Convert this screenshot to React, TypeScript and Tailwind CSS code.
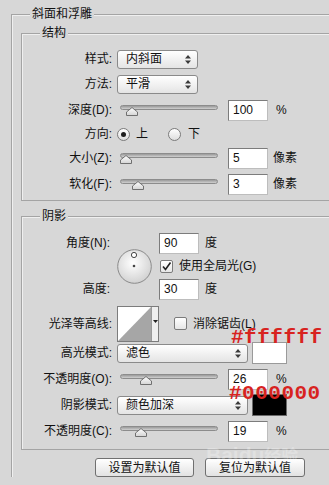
import type { ReactNode } from 'react'

const LINE = 'border-[#a4a4a4]'
const BG = 'bg-[#d7d7d7]'

function UpDown() {
  return (
    <svg width="6" height="9" viewBox="0 0 6 9">
      <path d="M3 0 L6 3.5 H0 Z M0 5.5 H6 L3 9 Z" fill="#3a3a3a" />
    </svg>
  )
}

function Select({ value, className }: { value: string; className: string }) {
  return (
    <div
      className={`flex h-[19px] items-center justify-between rounded-[3px] border border-[#8a8a8a] bg-linear-to-b from-white to-[#e4e4e4] pl-[8px] pr-[6px] ${className}`}
    >
      <span>{value}</span>
      <UpDown />
    </div>
  )
}

function Slider({ pos }: { pos: number }) {
  return (
    <div className="relative ml-[3px] h-[22px] w-[98px] shrink-0">
      <div className="absolute top-[6px] left-0 h-[5px] w-full rounded-full border border-[#8c8c8c] bg-linear-to-b from-[#9a9a9a] to-[#d0d0d0]" />
      <svg
        className="absolute top-[8px]"
        style={{ left: pos }}
        width="12"
        height="9"
        viewBox="0 0 12 9"
      >
        <defs>
          <linearGradient id="th" x1="0" y1="0" x2="0" y2="1">
            <stop offset="0" stopColor="#ffffff" />
            <stop offset="1" stopColor="#d4d4d4" />
          </linearGradient>
        </defs>
        <path d="M6 0.5 L11.5 5 V8.5 H0.5 V5 Z" fill="url(#th)" stroke="#707070" strokeLinejoin="round" />
      </svg>
    </div>
  )
}

function NumInput({ value, className = 'ml-[10px]' }: { value: string; className?: string }) {
  return (
    <div
      className={`flex h-[21px] w-[40px] shrink-0 items-center border border-[#7c7c7c] border-r-[#bdbdbd] border-b-[#bdbdbd] bg-white pl-[4px] ${className}`}
    >
      {value}
    </div>
  )
}

function Label({ children }: { children: ReactNode }) {
  return <div className="w-[91px] shrink-0 pr-[1px] text-right">{children}</div>
}

function Radio({ checked }: { checked?: boolean }) {
  return (
    <div className="flex h-[13px] w-[13px] items-center justify-center rounded-full border border-[#7b7b7b] bg-linear-to-b from-white to-[#dedede]">
      {checked && <div className="h-[5px] w-[5px] rounded-full bg-[#1e1e1e]" />}
    </div>
  )
}

function Check({ checked }: { checked?: boolean }) {
  return (
    <div className="flex h-[13px] w-[13px] items-center justify-center rounded-[2px] border border-[#7b7b7b] bg-linear-to-b from-white to-[#e6e6e6]">
      {checked && (
        <svg width="11" height="11" viewBox="0 0 11 11">
          <path d="M2 5.5 L4.5 8.5 L9.5 1.5" fill="none" stroke="#1e1e1e" strokeWidth="1.6" />
        </svg>
      )}
    </div>
  )
}

function Group({ title, className, children }: { title: string; className: string; children: ReactNode }) {
  return (
    <div className={`relative border-t border-l ${LINE} shadow-[inset_1px_1px_0_#efefef] ${className}`}>
      <span className={`absolute top-[-9px] left-[18px] px-[2px] leading-[16px] ${BG}`}>{title}</span>
      {children}
    </div>
  )
}

export default function App() {
  return (
    <div
      className={`relative h-[485px] w-[329px] overflow-hidden ${BG} font-['Liberation_Sans','Noto_Sans_CJK_SC',sans-serif] text-[12px] leading-none text-[#111]`}
    >
      <Group title="斜面和浮雕" className="mt-[14px] ml-[11px] w-[345px]">
        <Group title="结构" className="mt-[18px] ml-[9px] border-b pt-[14px] pb-[5px]">
          <div className="flex h-[22px] items-center">
            <Label>样式:</Label>
            <Select value="内斜面" className="ml-[4px] w-[81px]" />
          </div>
          <div className="mt-[3px] flex h-[22px] items-center">
            <Label>方法:</Label>
            <Select value="平滑" className="ml-[4px] w-[81px]" />
          </div>
          <div className="mt-[4px] flex h-[22px] items-center">
            <Label>深度(D):</Label>
            <div className="ml-[4px] flex items-center">
              <Slider pos={6} />
              <NumInput value="100" />
              <span className="ml-[8px]">%</span>
            </div>
          </div>
          <div className="mt-[2px] flex h-[22px] items-center">
            <Label>方向:</Label>
            <div className="ml-[4px] flex items-center">
              <Radio checked />
              <span className="ml-[6px]">上</span>
              <div className="ml-[20px]">
                <Radio />
              </div>
              <span className="ml-[7px]">下</span>
            </div>
          </div>
          <div className="mt-[2px] flex h-[22px] items-center">
            <Label>大小(Z):</Label>
            <div className="ml-[4px] flex items-center">
              <Slider pos={0} />
              <NumInput value="5" />
              <span className="ml-[5px]">像素</span>
            </div>
          </div>
          <div className="mt-[4px] flex h-[22px] items-center">
            <Label>软化(F):</Label>
            <div className="ml-[4px] flex items-center">
              <Slider pos={12} />
              <NumInput value="3" />
              <span className="ml-[5px]">像素</span>
            </div>
          </div>
        </Group>

        <Group title="阴影" className="mt-[15px] ml-[9px] border-b pt-[15px] pb-[7px]">
          <div className="flex">
            <div className="flex w-[91px] shrink-0 flex-col">
              <div className="flex h-[22px] items-center justify-end pr-[3px]">角度(N):</div>
              <div className="mt-[1px] h-[22px]" />
              <div className="mt-[1px] flex h-[22px] items-center justify-end pr-[3px]">高度:</div>
            </div>
            <div className="mt-[17px] ml-[4px]">
              <svg width="35" height="35" viewBox="0 0 35 35">
                <defs>
                  <radialGradient id="dial" cx="0.45" cy="0.4" r="0.6">
                    <stop offset="0" stopColor="#ffffff" />
                    <stop offset="1" stopColor="#d2d2d2" />
                  </radialGradient>
                </defs>
                <circle cx="17.5" cy="17.5" r="16.8" fill="url(#dial)" stroke="#8a8a8a" />
                <circle cx="17" cy="6" r="2.6" fill="#fff" stroke="#444" />
                <circle cx="17" cy="17" r="1.3" fill="#444" />
              </svg>
            </div>
            <div className="ml-[7px] flex flex-col">
              <div className="flex h-[22px] items-center">
                <NumInput value="90" className="" />
                <span className="ml-[6px]">度</span>
              </div>
              <div className="mt-[1px] flex h-[22px] items-center">
                <div className="ml-[1px]">
                  <Check checked />
                </div>
                <span className="ml-[6px]">使用全局光(G)</span>
              </div>
              <div className="mt-[1px] flex h-[22px] items-center">
                <NumInput value="30" className="" />
                <span className="ml-[6px]">度</span>
              </div>
            </div>
          </div>

          <div className="mt-[5px] flex h-[37px] items-center">
            <Label>光泽等高线:</Label>
            <div className="ml-[4px] flex h-[36px] w-[42px] border border-[#7c7c7c] bg-white">
              <svg width="33" height="34" viewBox="0 0 33 34">
                <path d="M0 34 L33 0 V34 Z" fill="#a6a6a6" />
              </svg>
              <div className="flex w-[7px] justify-center border-l border-[#9a9a9a] bg-[#efefef] pt-[13px]">
                <svg width="5" height="3" viewBox="0 0 5 3">
                  <path d="M0 0 H5 L2.5 3 Z" fill="#222" />
                </svg>
              </div>
            </div>
            <div className="ml-[15px]">
              <Check />
            </div>
            <span className="ml-[6px]">消除锯齿(L)</span>
          </div>

          <div className="flex h-[22px] items-center">
            <Label>高光模式:</Label>
            <Select value="滤色" className="ml-[4px] w-[131px]" />
            <div className="ml-[4px] h-[22px] w-[35px] border border-[#9a9a9a] bg-white" />
          </div>
          <div className="mt-[4px] flex h-[22px] items-center">
            <Label>不透明度(O):</Label>
            <div className="ml-[4px] flex items-center">
              <Slider pos={20} />
              <NumInput value="26" />
              <span className="ml-[8px]">%</span>
            </div>
          </div>
          <div className="mt-[4px] flex h-[22px] items-center">
            <Label>阴影模式:</Label>
            <Select value="颜色加深" className="ml-[4px] w-[131px]" />
            <div className="ml-[4px] h-[22px] w-[35px] border border-[#6a6a6a] bg-black" />
          </div>
          <div className="mt-[4px] flex h-[22px] items-center">
            <Label>不透明度(C):</Label>
            <div className="ml-[4px] flex items-center">
              <Slider pos={15} />
              <NumInput value="19" />
              <span className="ml-[8px]">%</span>
            </div>
          </div>
        </Group>

        <div className="mt-[8px] ml-[83px] flex gap-[11px]">
          {['设置为默认值', '复位为默认值'].map((t, i) => (
            <button
              key={t}
              className={`flex h-[19px] items-center justify-center rounded-[3px] border border-[#707070] bg-linear-to-b from-white to-[#e2e2e2] ${
                i === 0 ? 'w-[99px]' : 'w-[100px]'
              }`}
            >
              {t}
            </button>
          ))}
        </div>
      </Group>

      <span className="pointer-events-none absolute top-[444px] left-[206px] font-['Liberation_Sans',sans-serif] text-[21px] font-bold text-white/25">
        Baidu<span className="font-['Noto_Sans_CJK_SC',sans-serif] text-[17px]">经验</span>
      </span>

      <span className="absolute top-[327px] left-[231px] font-['Liberation_Mono',monospace] text-[21px] font-bold tracking-[0.5px] text-[#d8231f]">
        #ffffff
      </span>
      <span className="absolute top-[383px] left-[229px] font-['Liberation_Mono',monospace] text-[21px] font-bold tracking-[0.5px] text-[#d8231f]">
        #000000
      </span>
    </div>
  )
}
